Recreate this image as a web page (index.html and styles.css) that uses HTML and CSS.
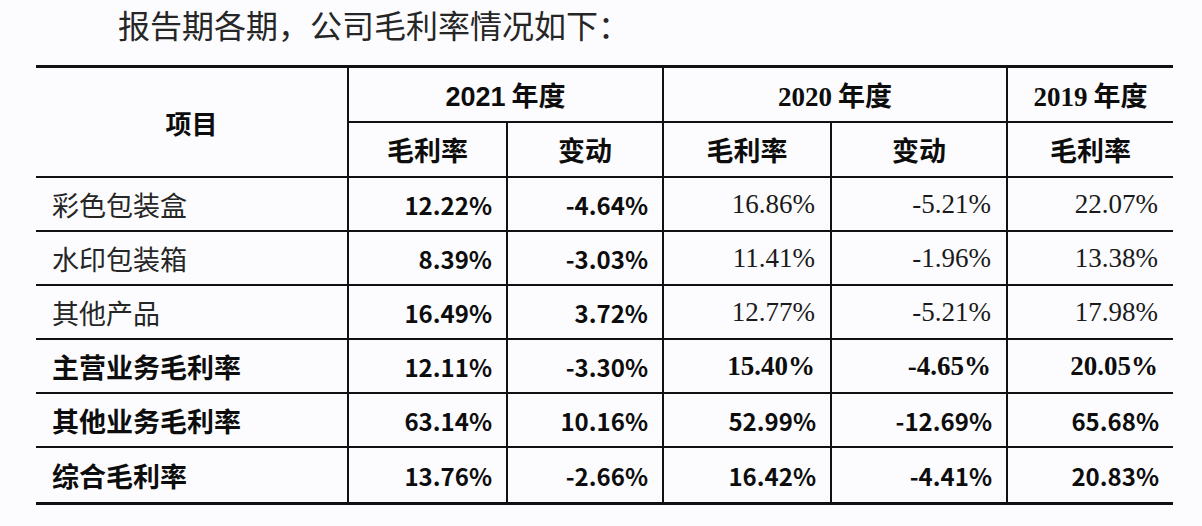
FILE: index.html
```html
<!DOCTYPE html>
<html lang="zh-CN">
<head>
<meta charset="utf-8">
<title>毛利率情况</title>
<link rel="stylesheet" href="styles.css">
</head>
<body>
<div class="page">
  <p class="intro">报告期各期，公司毛利率情况如下：</p>
  <table class="gm">
    <colgroup>
      <col class="c-item"><col class="c-a"><col class="c-b"><col class="c-c"><col class="c-d"><col class="c-e">
    </colgroup>
    <thead>
      <tr class="h1">
        <th rowspan="2" class="item edge-l">项目</th>
        <th colspan="2"><span class="sans-b">2021</span> 年度</th>
        <th colspan="2"><span class="serif-b">2020</span> 年度</th>
        <th class="edge-r"><span class="serif-b">2019</span> 年度</th>
      </tr>
      <tr class="h2">
        <th>毛利率</th><th>变动</th><th>毛利率</th><th>变动</th><th class="edge-r">毛利率</th>
      </tr>
    </thead>
    <tbody>
      <tr>
        <td class="lbl edge-l">彩色包装盒</td>
        <td class="hei">12.22%</td><td class="hei">-4.64%</td>
        <td class="tnr">16.86%</td><td class="tnr">-5.21%</td><td class="tnr edge-r">22.07%</td>
      </tr>
      <tr>
        <td class="lbl edge-l">水印包装箱</td>
        <td class="hei">8.39%</td><td class="hei">-3.03%</td>
        <td class="tnr">11.41%</td><td class="tnr">-1.96%</td><td class="tnr edge-r">13.38%</td>
      </tr>
      <tr>
        <td class="lbl edge-l">其他产品</td>
        <td class="hei">16.49%</td><td class="hei">3.72%</td>
        <td class="tnr">12.77%</td><td class="tnr">-5.21%</td><td class="tnr edge-r">17.98%</td>
      </tr>
      <tr>
        <td class="lbl lbl-b edge-l">主营业务毛利率</td>
        <td class="hei">12.11%</td><td class="hei">-3.30%</td>
        <td class="tnr tnr-b">15.40%</td><td class="tnr tnr-b">-4.65%</td><td class="tnr tnr-b edge-r">20.05%</td>
      </tr>
      <tr>
        <td class="lbl lbl-b edge-l">其他业务毛利率</td>
        <td class="hei">63.14%</td><td class="hei">10.16%</td>
        <td class="hei">52.99%</td><td class="hei">-12.69%</td><td class="hei edge-r">65.68%</td>
      </tr>
      <tr class="last">
        <td class="lbl lbl-b edge-l">综合毛利率</td>
        <td class="hei">13.76%</td><td class="hei">-2.66%</td>
        <td class="hei">16.42%</td><td class="hei">-4.41%</td><td class="hei edge-r">20.83%</td>
      </tr>
    </tbody>
  </table>
</div>
</body>
</html>
```

FILE: styles.css
```css
html, body {
  margin: 0;
  padding: 0;
  background: #fcfcfe;
}

.page {
  width: 1202px;
  height: 526px;
  box-sizing: border-box;
  padding-left: 36px;
  font-family: "Noto Sans CJK SC", sans-serif;
  color: #1c1c1c;
}

.intro {
  margin: 0 0 17px 82px;
  font-size: 32px;
  line-height: 48px;
  font-weight: 400;
  color: #262626;
  letter-spacing: 0;
}

.gm {
  border-collapse: collapse;
  table-layout: fixed;
  width: 1137px;
}

.c-item { width: 312px; }
.c-a { width: 159px; }
.c-b { width: 156px; }
.c-c { width: 168px; }
.c-d { width: 176px; }
.c-e { width: 166px; }

.gm th,
.gm td {
  border: 2px solid #111;
  padding: 0;
  font-size: 27px;
  white-space: nowrap;
  vertical-align: middle;
}

.gm .edge-l { border-left: none; }
.gm .edge-r { border-right: none; }

.gm .h1 th { border-top: 3px solid #111; height: 53px; }
.gm .h2 th { height: 53px; }
.gm .last td { border-bottom: 3px solid #111; height: 54px; }
.gm tbody tr { height: 54px; }
.gm tbody td { height: 52px; }

.gm th {
  font-weight: 700;
  text-align: center;
  color: #0d0d0d;
}

.gm th.item {
  font-size: 26px;
}

.sans-b {
  font-family: "Liberation Sans", sans-serif;
  font-weight: 700;
}

.serif-b {
  font-family: "Liberation Serif", serif;
  font-weight: 700;
}

.gm td.lbl {
  text-align: left;
  padding-left: 16px;
  font-weight: 400;
  color: #262626;
}

.gm td.lbl-b {
  font-weight: 700;
  color: #0d0d0d;
}

.gm td.hei {
  text-align: right;
  padding-right: 14px;
  font-family: "Noto Sans CJK SC", sans-serif;
  font-size: 24px;
  font-weight: 700;
  color: #0d0d0d;
  letter-spacing: 0;
}

.gm td.tnr {
  text-align: right;
  padding-right: 15px;
  font-family: "Liberation Serif", serif;
  font-weight: 400;
  color: #1a1a1a;
}

.gm td.tnr-b {
  font-weight: 700;
  color: #0d0d0d;
}
```
